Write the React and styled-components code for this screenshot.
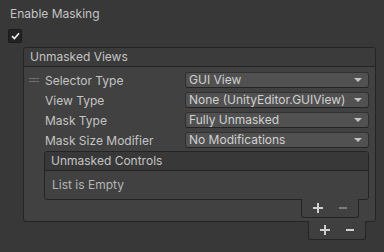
import React from "react";
import styled, { createGlobalStyle } from "styled-components";

const GlobalStyle = createGlobalStyle`
  html, body {
    margin: 0;
    background: #383838;
  }
  body {
    font-family: Inter, "Noto Sans", sans-serif;
    font-size: 12px;
    color: #c4c4c4;
  }
`;

const Page = styled.div`
  width: 384px;
  height: 252px;
  box-sizing: border-box;
  padding: 5px 8px 0 8px;
`;

const FieldLabel = styled.div`
  height: 18px;
  line-height: 18px;
  margin-left: 2px;
`;

const Checkbox = styled.div`
  width: 14px;
  height: 14px;
  box-sizing: border-box;
  margin: 6px 0 4px 0;
  background: #232323;
  border: 1px solid #1a1a1a;
  border-radius: 2px;
  display: flex;
  align-items: center;
  justify-content: center;
`;

const ListBox = styled.div`
  margin-top: ${(p) => p.$top || 0}px;
  border: 1px solid #242424;
  border-radius: 3px;
  background: #414141;
  position: relative;
`;

const ListHeader = styled.div`
  height: 18px;
  line-height: 18px;
  padding-left: ${(p) => p.$pad}px;
  background: ${(p) => p.$bg};
  border-bottom: 1px solid #242424;
  border-radius: 3px 3px 0 0;
`;

const ListBody = styled.div`
  padding: ${(p) => p.$padding};
`;

const Row = styled.div`
  display: flex;
  align-items: center;
  height: 20px;
`;

const Handle = styled.div`
  width: 16px;
  display: flex;
  flex-direction: column;
  gap: 2px;
  &::before,
  &::after {
    content: "";
    display: ${(p) => (p.$show ? "block" : "none")};
    width: 10px;
    height: 1px;
    background: #6e6e6e;
  }
`;

const RowLabel = styled.div`
  width: 140px;
  white-space: nowrap;
`;

const Dropdown = styled.div`
  flex: 1;
  height: 16px;
  box-sizing: border-box;
  background: #515151;
  border: 1px solid #2e2e2e;
  border-top-color: #323232;
  border-bottom-color: #242424;
  border-radius: 3px;
  display: flex;
  align-items: center;
  justify-content: space-between;
  padding: 0 6px 0 3px;
  color: #d0d0d0;
  line-height: 14px;
`;

const Arrow = styled.span`
  width: 0;
  height: 0;
  border-left: 4px solid transparent;
  border-right: 4px solid transparent;
  border-top: 4px solid #c4c4c4;
`;

const EmptyText = styled.div`
  height: 28px;
  line-height: 28px;
  padding-left: 7px;
  color: #b4b4b4;
`;

const Footer = styled.div`
  align-self: flex-end;
  display: flex;
  width: 58px;
  height: 19px;
  box-sizing: border-box;
  margin: -1px ${(p) => p.$right}px 0 0;
  padding: 0 3px;
  background: ${(p) => p.$bg};
  border: 1px solid #242424;
  border-top: none;
  border-radius: 0 0 3px 3px;
  position: relative;
`;

const FooterButton = styled.div`
  width: 25px;
  display: flex;
  align-items: center;
  justify-content: center;
  color: ${(p) => (p.$dim ? "#7c7c7c" : "#cfcfcf")};
`;

const Column = styled.div`
  display: flex;
  flex-direction: column;
  margin-left: ${(p) => p.$indent || 0}px;
`;

const PlusIcon = () => (
  <svg width="10" height="10" viewBox="0 0 10 10">
    <rect x="4" y="0" width="2" height="10" fill="currentColor" />
    <rect x="0" y="4" width="10" height="2" fill="currentColor" />
  </svg>
);

const MinusIcon = () => (
  <svg width="10" height="10" viewBox="0 0 10 10">
    <rect x="1" y="4" width="8" height="2" fill="currentColor" />
  </svg>
);

const CheckIcon = () => (
  <svg width="9" height="8" viewBox="0 0 9 8">
    <path d="M1 4.2 L3.4 6.5 L8 1.2" stroke="#f2f2f2" strokeWidth="1.6" fill="none" />
  </svg>
);

const fields = [
  { label: "Selector Type", value: "GUI View", handle: true },
  { label: "View Type", value: "None (UnityEditor.GUIView)" },
  { label: "Mask Type", value: "Fully Unmasked" },
  { label: "Mask Size Modifier", value: "No Modifications" },
];

const Buttons = ({ dimMinus }) => (
  <>
    <FooterButton>
      <PlusIcon />
    </FooterButton>
    <FooterButton $dim={dimMinus}>
      <MinusIcon />
    </FooterButton>
  </>
);

export default function App() {
  return (
    <>
      <GlobalStyle />
      <Page>
        <FieldLabel>Enable Masking</FieldLabel>
        <Checkbox>
          <CheckIcon />
        </Checkbox>
        <Column $indent={15}>
          <ListBox>
            <ListHeader $pad={6} $bg="#3b3b3b">
              Unmasked Views
            </ListHeader>
            <ListBody $padding="3px 6px 3px 5px">
              <Column>
                {fields.map((f) => (
                  <Row key={f.label}>
                    <Handle $show={f.handle} />
                    <RowLabel>{f.label}</RowLabel>
                    <Dropdown>
                      <span>{f.value}</span>
                      <Arrow />
                    </Dropdown>
                  </Row>
                ))}
                <Column $indent={15}>
                  <ListBox $top={1}>
                    <ListHeader $pad={6} $bg="#383838">
                      Unmasked Controls
                    </ListHeader>
                    <EmptyText>List is Empty</EmptyText>
                  </ListBox>
                  <Footer $right={10} $bg="#414141">
                    <Buttons dimMinus />
                  </Footer>
                </Column>
              </Column>
            </ListBody>
          </ListBox>
          <Footer $right={10} $bg="#3f3f3f">
            <Buttons />
          </Footer>
        </Column>
      </Page>
    </>
  );
}
